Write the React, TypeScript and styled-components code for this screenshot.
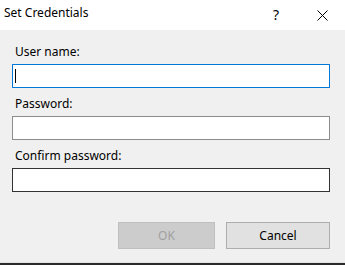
import styled, { createGlobalStyle } from "styled-components";

const GlobalStyle = createGlobalStyle`
  html, body {
    margin: 0;
    padding: 0;
    background: #2b2b2b;
  }
  body {
    font-family: "Noto Sans", "Open Sans", sans-serif;
    font-size: 12px;
    color: #000;
  }
`;

const Window = styled.div`
  width: 345px;
  height: 262px;
  display: flex;
  flex-direction: column;
  background: #f0f0f0;
  border-bottom: 1px solid #e4e4e4;
`;

const TitleBar = styled.div`
  height: 30px;
  display: flex;
  justify-content: space-between;
  background: #ffffff;
`;

const Title = styled.div`
  padding: 5px 0 0 4px;
  line-height: 16px;
  font-size: 12px;
`;

const Caption = styled.div`
  display: flex;
`;

const CaptionButton = styled.div`
  width: 46px;
  height: 30px;
  display: flex;
  align-items: center;
  justify-content: center;
  font-size: 14px;
  line-height: 16px;
`;

const Body = styled.div`
  display: flex;
  flex-direction: column;
  padding: 14px 15px 0 12px;
  gap: 8px;
`;

const Group = styled.div`
  display: flex;
  flex-direction: column;
  gap: 4px;
`;

const Label = styled.div`
  padding-left: 3px;
  line-height: 16px;
  color: #000;
`;

const Field = styled.div<{ $border: string }>`
  height: 24px;
  box-sizing: border-box;
  border: 1px solid ${(p) => p.$border};
  background: #ffffff;
  display: flex;
  align-items: center;
  padding-left: 2px;
`;

const Caret = styled.span`
  width: 1px;
  height: 14px;
  background: #000;
`;

const Buttons = styled.div`
  display: flex;
  justify-content: flex-end;
  gap: 11px;
  padding: 30px 15px 0 0;
`;

const Button = styled.div<{ $width: number; $disabled?: boolean }>`
  width: ${(p) => p.$width}px;
  height: 27px;
  box-sizing: border-box;
  display: flex;
  align-items: center;
  justify-content: center;
  border: 1px solid ${(p) => (p.$disabled ? "#bfbfbf" : "#adadad")};
  background: ${(p) => (p.$disabled ? "#cccccc" : "#e1e1e1")};
  color: ${(p) => (p.$disabled ? "#a0a0a0" : "#000")};
  font-size: 12px;
`;

const CloseIcon = () => (
  <svg width="11" height="11" viewBox="0 0 11 11">
    <path d="M0.5 0.5 L10.5 10.5 M10.5 0.5 L0.5 10.5" stroke="#000" strokeWidth="1" fill="none" />
  </svg>
);

export default function App() {
  return (
    <>
      <GlobalStyle />
      <Window>
        <TitleBar>
          <Title>Set Credentials</Title>
          <Caption>
            <CaptionButton>?</CaptionButton>
            <CaptionButton>
              <CloseIcon />
            </CaptionButton>
          </Caption>
        </TitleBar>
        <Body>
          <Group>
            <Label>User name:</Label>
            <Field $border="#0078d7">
              <Caret />
            </Field>
          </Group>
          <Group>
            <Label>Password:</Label>
            <Field $border="#8c8c8c" />
          </Group>
          <Group>
            <Label>Confirm password:</Label>
            <Field $border="#333333" />
          </Group>
        </Body>
        <Buttons>
          <Button $width={97} $disabled>
            OK
          </Button>
          <Button $width={104}>Cancel</Button>
        </Buttons>
      </Window>
    </>
  );
}
